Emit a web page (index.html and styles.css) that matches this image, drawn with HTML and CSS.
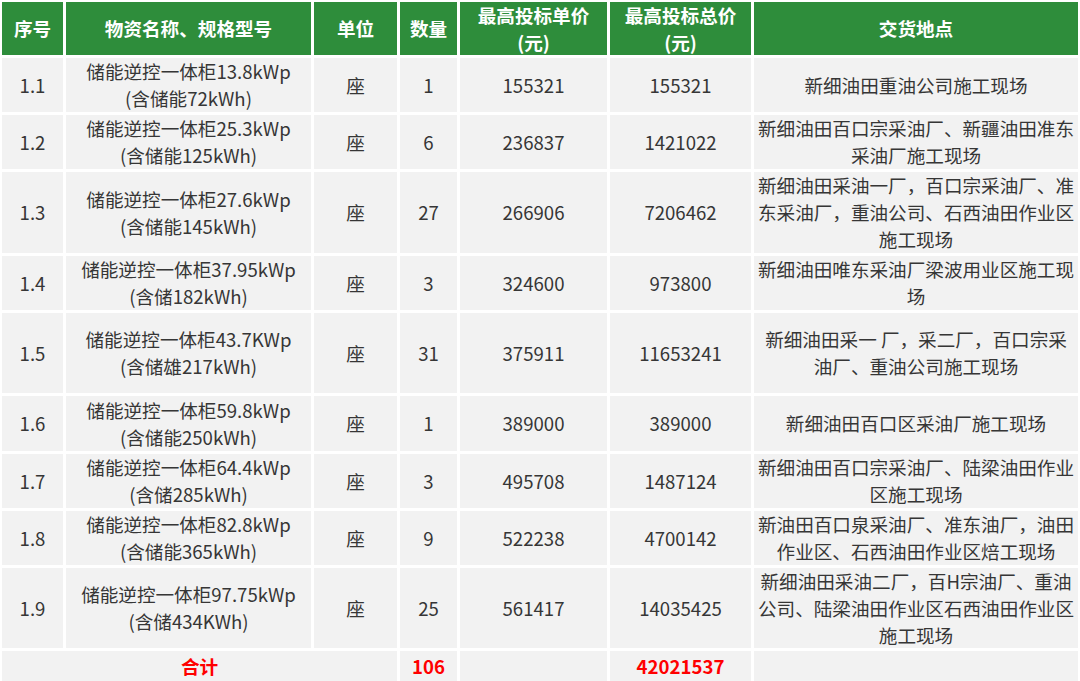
FILE: index.html
```html
<!DOCTYPE html>
<html lang="zh">
<head>
<meta charset="utf-8">
<title>储能逆控一体柜</title>
<link rel="stylesheet" href="styles.css">
</head>
<body>
<div class="sheet">
  <div class="cell head">序号</div>
  <div class="cell head">物资名称、规格型号</div>
  <div class="cell head">单位</div>
  <div class="cell head">数量</div>
  <div class="cell head">最高投标单价<br>(元)</div>
  <div class="cell head">最高投标总价<br>(元)</div>
  <div class="cell head">交货地点</div>

  <div class="cell">1.1</div>
  <div class="cell">储能逆控一体柜13.8kWp<br>(含储能72kWh)</div>
  <div class="cell">座</div>
  <div class="cell">1</div>
  <div class="cell">155321</div>
  <div class="cell">155321</div>
  <div class="cell">新细油田重油公司施工现场</div>

  <div class="cell">1.2</div>
  <div class="cell">储能逆控一体柜25.3kWp<br>(含储能125kWh)</div>
  <div class="cell">座</div>
  <div class="cell">6</div>
  <div class="cell">236837</div>
  <div class="cell">1421022</div>
  <div class="cell">新细油田百口宗采油厂、新疆油田准东<br>采油厂施工现场</div>

  <div class="cell">1.3</div>
  <div class="cell">储能逆控一体柜27.6kWp<br>(含储能145kWh)</div>
  <div class="cell">座</div>
  <div class="cell">27</div>
  <div class="cell">266906</div>
  <div class="cell">7206462</div>
  <div class="cell">新细油田采油一厂，百口宗采油厂、准<br>东采油厂，重油公司、石西油田作业区<br>施工现场</div>

  <div class="cell">1.4</div>
  <div class="cell">储能逆控一体柜37.95kWp<br>(含储182kWh)</div>
  <div class="cell">座</div>
  <div class="cell">3</div>
  <div class="cell">324600</div>
  <div class="cell">973800</div>
  <div class="cell">新细油田唯东采油厂梁波用业区施工现<br>场</div>

  <div class="cell">1.5</div>
  <div class="cell">储能逆控一体柜43.7KWp<br>(含储雄217kWh)</div>
  <div class="cell">座</div>
  <div class="cell">31</div>
  <div class="cell">375911</div>
  <div class="cell">11653241</div>
  <div class="cell">新细油田采一 厂，采二厂，百口宗采<br>油厂、重油公司施工现场</div>

  <div class="cell">1.6</div>
  <div class="cell">储能逆控一体柜59.8kWp<br>(含储能250kWh)</div>
  <div class="cell">座</div>
  <div class="cell">1</div>
  <div class="cell">389000</div>
  <div class="cell">389000</div>
  <div class="cell">新细油田百口区采油厂施工现场</div>

  <div class="cell">1.7</div>
  <div class="cell">储能逆控一体柜64.4kWp<br>(含储285kWh)</div>
  <div class="cell">座</div>
  <div class="cell">3</div>
  <div class="cell">495708</div>
  <div class="cell">1487124</div>
  <div class="cell">新细油田百口宗采油厂、陆梁油田作业<br>区施工现场</div>

  <div class="cell">1.8</div>
  <div class="cell">储能逆控一体柜82.8kWp<br>(含储能365kWh)</div>
  <div class="cell">座</div>
  <div class="cell">9</div>
  <div class="cell">522238</div>
  <div class="cell">4700142</div>
  <div class="cell">新油田百口泉采油厂、准东油厂，油田<br>作业区、石西油田作业区焙工现场</div>

  <div class="cell">1.9</div>
  <div class="cell">储能逆控一体柜97.75kWp<br>(含储434KWh)</div>
  <div class="cell">座</div>
  <div class="cell">25</div>
  <div class="cell">561417</div>
  <div class="cell">14035425</div>
  <div class="cell">新细油田采油二厂，百H宗油厂、重油<br>公司、陆梁油田作业区石西油田作业区<br>施工现场</div>

  <div class="cell total span3">合计</div>
  <div class="cell total">106</div>
  <div class="cell"></div>
  <div class="cell total">42021537</div>
  <div class="cell"></div>
</div>
</body>
</html>
```

FILE: styles.css
```css
html, body {
  margin: 0;
  padding: 0;
  background: #ffffff;
  overflow: hidden;
}

.sheet {
  display: grid;
  grid-template-columns: 61px 245px 83px 57px 147px 141px 324px;
  grid-template-rows: 53px 54px 54px 81px 54px 80px 55px 54px 54px 80px 30px;
  gap: 3px;
  padding: 2px 2px 0 2px;
  width: 1076px;
  font-family: "Noto Sans CJK SC", "Noto Sans", sans-serif;
  font-size: 18.6px;
  line-height: 27px;
  color: #363636;
}

.cell {
  background: #f2f2f2;
  display: flex;
  align-items: center;
  justify-content: center;
  text-align: center;
  white-space: nowrap;
  padding-bottom: 2px;
}

.head {
  background: #2e8d3b;
  color: #ffffff;
  font-weight: 700;
}

.total {
  color: #ff0000;
  font-weight: 700;
}

.span3 {
  grid-column: span 3;
}
```
